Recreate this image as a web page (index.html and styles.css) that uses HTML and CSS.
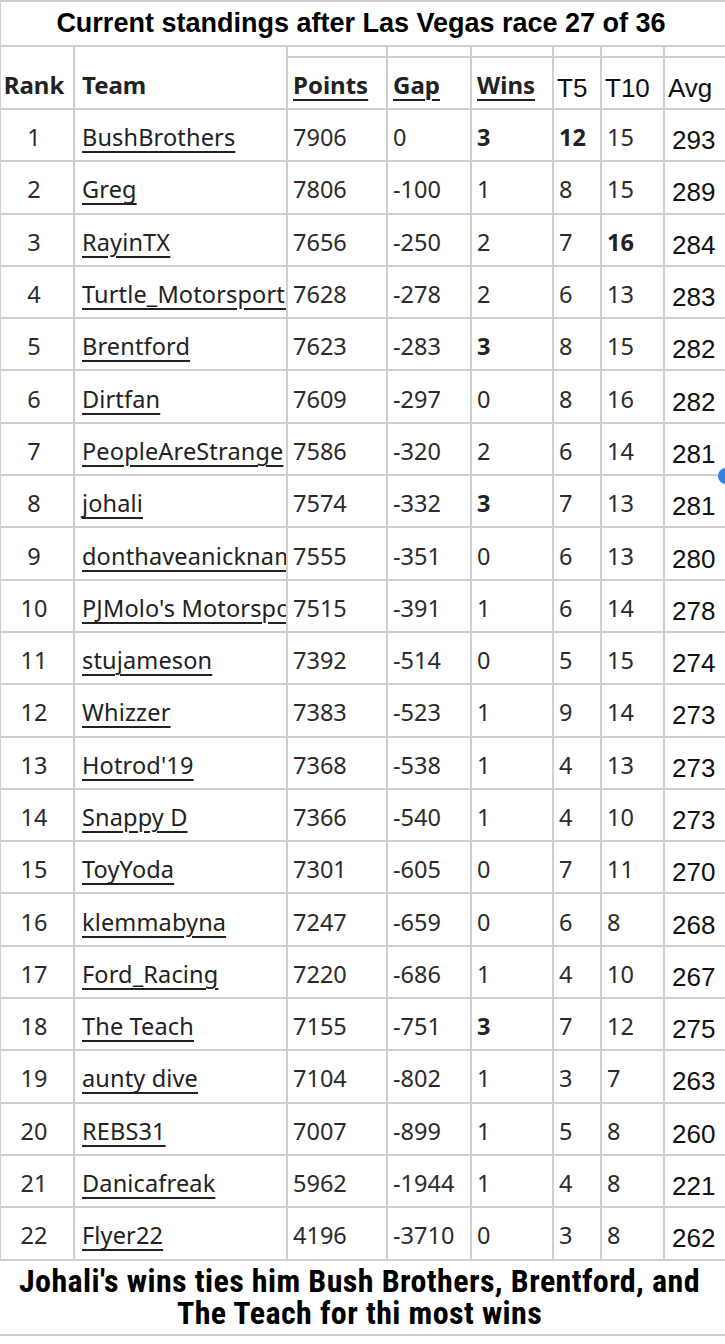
FILE: index.html
```html
<!DOCTYPE html>
<html>
<head>
<meta charset="utf-8">
<link rel="stylesheet" href="styles.css">
</head>
<body>
<div class="wrap">
<table class="standings">
  <colgroup>
    <col class="c-rank"><col class="c-team"><col class="c-points"><col class="c-gap"><col class="c-wins"><col class="c-t5"><col class="c-t10"><col class="c-avg">
  </colgroup>
  <thead>
    <tr class="title-row"><th colspan="8" class="title">Current standings after Las Vegas race 27 of 36</th></tr>
    <tr class="spacer-row">
      <th rowspan="2" class="hd hd-rank">Rank</th>
      <th rowspan="2" class="hd hd-team">Team</th>
      <th></th><th></th><th></th><th></th><th></th><th></th>
    </tr>
    <tr class="head-row">
      <th class="hd sort"><span>Points</span></th>
      <th class="hd sort"><span>Gap</span></th>
      <th class="hd sort"><span>Wins</span></th>
      <th class="hd plain">T5</th>
      <th class="hd plain">T10</th>
      <th class="hd plain">Avg</th>
    </tr>
  </thead>
  <tbody>
    <tr><td class="rank">1</td><td class="team"><a>BushBrothers</a></td><td>7906</td><td>0</td><td><b>3</b></td><td><b>12</b></td><td>15</td><td class="avg">293</td></tr>
    <tr><td class="rank">2</td><td class="team"><a>Greg</a></td><td>7806</td><td>-100</td><td>1</td><td>8</td><td>15</td><td class="avg">289</td></tr>
    <tr><td class="rank">3</td><td class="team"><a>RayinTX</a></td><td>7656</td><td>-250</td><td>2</td><td>7</td><td><b>16</b></td><td class="avg">284</td></tr>
    <tr><td class="rank">4</td><td class="team"><a>Turtle_Motorsports</a></td><td>7628</td><td>-278</td><td>2</td><td>6</td><td>13</td><td class="avg">283</td></tr>
    <tr><td class="rank">5</td><td class="team"><a>Brentford</a></td><td>7623</td><td>-283</td><td><b>3</b></td><td>8</td><td>15</td><td class="avg">282</td></tr>
    <tr><td class="rank">6</td><td class="team"><a>Dirtfan</a></td><td>7609</td><td>-297</td><td>0</td><td>8</td><td>16</td><td class="avg">282</td></tr>
    <tr><td class="rank">7</td><td class="team"><a>PeopleAreStrange</a></td><td>7586</td><td>-320</td><td>2</td><td>6</td><td>14</td><td class="avg">281</td></tr>
    <tr><td class="rank">8</td><td class="team"><a>johali</a></td><td>7574</td><td>-332</td><td><b>3</b></td><td>7</td><td>13</td><td class="avg">281</td></tr>
    <tr><td class="rank">9</td><td class="team"><a>donthaveanickname</a></td><td>7555</td><td>-351</td><td>0</td><td>6</td><td>13</td><td class="avg">280</td></tr>
    <tr><td class="rank">10</td><td class="team"><a>PJMolo's Motorsports</a></td><td>7515</td><td>-391</td><td>1</td><td>6</td><td>14</td><td class="avg">278</td></tr>
    <tr><td class="rank">11</td><td class="team"><a>stujameson</a></td><td>7392</td><td>-514</td><td>0</td><td>5</td><td>15</td><td class="avg">274</td></tr>
    <tr><td class="rank">12</td><td class="team"><a>Whizzer</a></td><td>7383</td><td>-523</td><td>1</td><td>9</td><td>14</td><td class="avg">273</td></tr>
    <tr><td class="rank">13</td><td class="team"><a>Hotrod'19</a></td><td>7368</td><td>-538</td><td>1</td><td>4</td><td>13</td><td class="avg">273</td></tr>
    <tr><td class="rank">14</td><td class="team"><a>Snappy D</a></td><td>7366</td><td>-540</td><td>1</td><td>4</td><td>10</td><td class="avg">273</td></tr>
    <tr><td class="rank">15</td><td class="team"><a>ToyYoda</a></td><td>7301</td><td>-605</td><td>0</td><td>7</td><td>11</td><td class="avg">270</td></tr>
    <tr><td class="rank">16</td><td class="team"><a>klemmabyna</a></td><td>7247</td><td>-659</td><td>0</td><td>6</td><td>8</td><td class="avg">268</td></tr>
    <tr><td class="rank">17</td><td class="team"><a>Ford_Racing</a></td><td>7220</td><td>-686</td><td>1</td><td>4</td><td>10</td><td class="avg">267</td></tr>
    <tr><td class="rank">18</td><td class="team"><a>The Teach</a></td><td>7155</td><td>-751</td><td><b>3</b></td><td>7</td><td>12</td><td class="avg">275</td></tr>
    <tr><td class="rank">19</td><td class="team"><a>aunty dive</a></td><td>7104</td><td>-802</td><td>1</td><td>3</td><td>7</td><td class="avg">263</td></tr>
    <tr><td class="rank">20</td><td class="team"><a>REBS31</a></td><td>7007</td><td>-899</td><td>1</td><td>5</td><td>8</td><td class="avg">260</td></tr>
    <tr><td class="rank">21</td><td class="team"><a>Danicafreak</a></td><td>5962</td><td>-1944</td><td>1</td><td>4</td><td>8</td><td class="avg">221</td></tr>
    <tr><td class="rank">22</td><td class="team"><a>Flyer22</a></td><td>4196</td><td>-3710</td><td>0</td><td>3</td><td>8</td><td class="avg">262</td></tr>
  </tbody>
  <tfoot>
    <tr><td colspan="8" class="note">Johali's wins ties him Bush Brothers, Brentford, and The Teach for thi most wins</td></tr>
  </tfoot>
</table>
</div>
<div class="scroll-dot"></div>
</body>
</html>
```

FILE: styles.css
```css
html, body {
  margin: 0;
  padding: 0;
  background: #fff;
}
.wrap {
  width: 725px;
  overflow: hidden;
}
.standings {
  width: 730px;
  table-layout: fixed;
  border-collapse: collapse;
  font-family: "Noto Sans", sans-serif;
  color: #2b2b2b;
  margin-left: -1px;
}
.c-rank { width: 74px; }
.c-team { width: 213px; }
.c-points { width: 100px; }
.c-gap { width: 84px; }
.c-wins { width: 82px; }
.c-t5 { width: 48px; }
.c-t10 { width: 63px; }
.c-avg { width: 66px; }

.standings th, .standings td {
  border: 2px solid #cfcfcf;
  padding: 0;
}
.title-row { height: 45px; }
.title {
  font-family: "Liberation Sans", Arial, sans-serif;
  font-weight: bold;
  font-size: 27px;
  line-height: 30px;
  color: #000;
  text-align: center;
  padding: 0 8px 2px 0 !important;
  vertical-align: middle;
}
.spacer-row { height: 11px; }
.head-row { height: 52px; }
.hd {
  font-size: 24px;
  font-weight: bold;
  color: #222;
  text-align: left;
  vertical-align: bottom;
  padding-bottom: 8px !important;
  line-height: 30px;
  white-space: nowrap;
}
.hd-rank { text-align: center; padding-right: 6px !important; }
.hd-team { padding-left: 7px !important; }
.sort { padding-left: 5px !important; }
.sort span {
  text-decoration: underline;
  text-decoration-thickness: 2px;
  text-underline-offset: 5px;
}
.plain {
  font-family: "Liberation Sans", Arial, sans-serif;
  font-weight: normal;
  font-size: 26px;
  color: #111;
  padding-left: 3px !important;
  padding-bottom: 5px !important;
}
.standings tbody tr { height: 52.3px; }
.standings tbody td {
  font-size: 23.5px;
  line-height: 28px;
  white-space: nowrap;
  overflow: hidden;
  text-overflow: clip;
  padding-left: 5px;
  padding-top: 4px;
  vertical-align: middle;
}
.standings tbody td b { font-weight: bold; color: #222; }
.standings tbody td.rank { text-align: center; padding-left: 0; padding-right: 6px; }
.standings tbody td.team { padding-left: 7px; letter-spacing: 0.15px; }
.team a {
  color: #222;
  text-decoration: underline;
  text-decoration-thickness: 2px;
  text-underline-offset: 5px;
}
.standings tbody td.avg {
  font-family: "Liberation Sans", Arial, sans-serif;
  font-size: 26px;
  color: #111;
  padding-left: 7px;
  padding-top: 10px;
}
.note {
  font-family: "Roboto Condensed", "Liberation Sans Narrow", "Liberation Sans", sans-serif;
  font-weight: bold;
  font-size: 32px;
  line-height: 32px;
  letter-spacing: 0.4px;
  color: #000;
  text-align: center;
  padding: 4px 10px 5px 0 !important;
  border-left: none !important;
}
.scroll-dot {
  position: fixed;
  left: 718px;
  top: 468px;
  width: 16px;
  height: 16px;
  border-radius: 50%;
  background: #3b7ee3;
}
```
